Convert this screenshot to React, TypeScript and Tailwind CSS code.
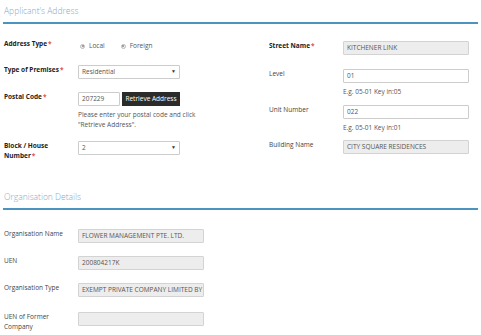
import type { ReactNode } from 'react'

function Req() {
  return <span className="ml-[1px] text-[#d9534f]">*</span>
}

function SectionTitle({ title }: { title: string }) {
  return (
    <div className="mx-[3px] border-b-2 border-[#4b94bf] pb-[5px] pl-[1px]">
      <h2 className="text-[8.5px] leading-[12px] font-light text-[#86a9c9]">{title}</h2>
    </div>
  )
}

function Row({
  label,
  bold,
  required,
  children,
  className = '',
}: {
  label: ReactNode
  bold?: boolean
  required?: boolean
  children: ReactNode
  className?: string
}) {
  return (
    <div className={`flex items-start ${className}`}>
      <div
        className={`w-[74px] shrink-0 pr-2 text-[6.5px] leading-[10px] ${
          bold ? 'font-bold text-[#222]' : 'text-[#444]'
        }`}
      >
        {label}
        {required && <Req />}
      </div>
      <div className="flex-1">{children}</div>
    </div>
  )
}

function Field({ value, readOnly, width = 'w-[126px]' }: { value: string; readOnly?: boolean; width?: string }) {
  return (
    <div
      className={`${width} h-[14px] overflow-hidden whitespace-nowrap rounded-[1px] border px-[3px] text-[6.5px] leading-[12px] ${
        readOnly ? 'border-[#d3d3d3] bg-[#ededed] text-[#555]' : 'border-[#cccccc] bg-white text-[#555]'
      }`}
    >
      {value}
    </div>
  )
}

function Select({ value }: { value: string }) {
  return (
    <div className="flex h-[14px] w-[102px] items-center justify-between rounded-[1px] border border-[#cccccc] bg-white px-[3px] text-[6.5px] text-[#555]">
      <span>{value}</span>
      <span className="text-[5px] text-[#333]">▼</span>
    </div>
  )
}

function Help({ children }: { children: ReactNode }) {
  return <p className="mt-[4px] text-[6.5px] leading-[10px] text-[#555]">{children}</p>
}

function Radio({ label }: { label: string }) {
  return (
    <label className="flex items-center gap-[4px] text-[6.5px] text-[#555]">
      <span className="flex size-[5px] items-center justify-center rounded-full border border-[#bbb] bg-[#eee]">
        <span className="size-[2px] rounded-full bg-[#888]" />
      </span>
      {label}
    </label>
  )
}

export default function App() {
  return (
    <div className="h-[335px] w-[481px] overflow-hidden bg-white pt-[5px]" style={{ fontFamily: '"Open Sans", "Liberation Sans", sans-serif' }}>
      <SectionTitle title="Applicant's Address" />

      <div className="flex pl-[4px]">
        <div className="w-[265px]">
          <Row label="Address Type" bold required className="mt-[15px]">
            <div className="flex h-[14px] items-center gap-[16px] pl-[2px]">
              <Radio label="Local" />
              <Radio label="Foreign" />
            </div>
          </Row>
          <Row label="Type of Premises" bold required className="mt-[12px]">
            <Select value="Residential" />
          </Row>
          <Row label="Postal Code" bold required className="mt-[13px]">
            <div className="flex">
              <Field value="207229" width="w-[42px]" />
              <button className="ml-[2px] h-[14px] w-[58px] bg-[#2b2b2b] text-[6.5px] leading-[14px] text-white">
                Retrieve Address
              </button>
            </div>
            <Help>
              Please enter your postal code and click
              <br />
              "Retrieve Address".
            </Help>
          </Row>
          <Row
            label={
              <>
                Block / House
                <br />
                Number
              </>
            }
            bold
            required
            className="mt-[11px]"
          >
            <Select value="2" />
          </Row>
        </div>

        <div className="flex-1">
          <Row label="Street Name" bold required className="mt-[17px]">
            <Field value="KITCHENER LINK" readOnly />
          </Row>
          <Row label="Level" className="mt-[14px]">
            <Field value="01" />
            <Help>E.g. 05-01 Key in:05</Help>
          </Row>
          <Row label="Unit Number" className="mt-[8px]">
            <Field value="022" />
            <Help>E.g. 05-01 Key in:01</Help>
          </Row>
          <Row label="Building Name" className="mt-[7px]">
            <Field value="CITY SQUARE RESIDENCES" readOnly />
          </Row>
        </div>
      </div>

      <div className="mt-[30px]">
        <SectionTitle title="Organisation Details" />
      </div>

      <div className="pl-[4px]">
        <Row label="Organisation Name" className="mt-[19px]">
          <Field value="FLOWER MANAGEMENT PTE. LTD." readOnly />
        </Row>
        <Row label="UEN" className="mt-[13px]">
          <Field value="200804217K" readOnly />
        </Row>
        <Row label="Organisation Type" className="mt-[13px]">
          <Field value="EXEMPT PRIVATE COMPANY LIMITED BY" readOnly />
        </Row>
        <Row
          label={
            <>
              UEN of Former
              <br />
              Company
            </>
          }
          className="mt-[15px]"
        >
          <Field value="" readOnly />
        </Row>
      </div>
    </div>
  )
}
